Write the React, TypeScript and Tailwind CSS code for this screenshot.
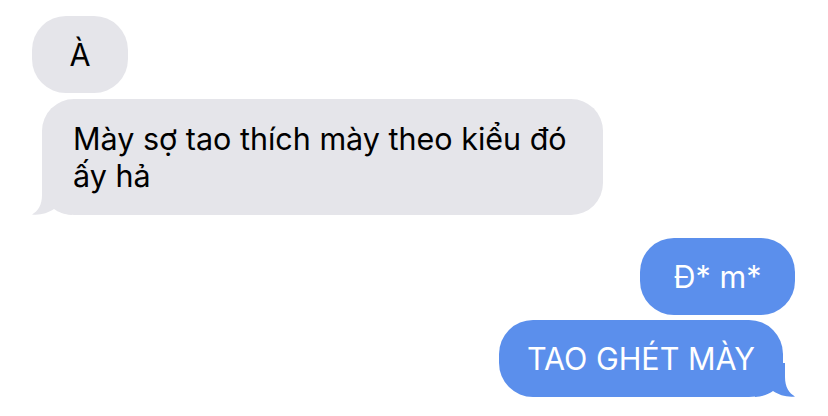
import React from 'react';

const font = { fontFamily: 'Inter, "Noto Sans", sans-serif' };

function Tail({ color, side }: { color: string; side: 'left' | 'right' }) {
  return (
    <svg
      width="40"
      height="34"
      viewBox="0 0 40 34"
      className={
        side === 'left'
          ? 'absolute bottom-0 left-[-10px]'
          : 'absolute bottom-0 right-[-12px] -scale-x-100'
      }
    >
      <path
        d="M10 0 L10 14 C10 24 6 30 0 33.5 C8 34.5 16 32 22 28 C26 31 32 33.5 40 34 L40 0 Z"
        fill={color}
      />
    </svg>
  );
}

export default function App() {
  return (
    <div className="w-[828px] h-[416px] bg-white overflow-hidden pt-[16px] text-[30.5px] leading-[37px]" style={font}>
      <div className="flex flex-col">
        <div className="ml-[32px] w-[96px] rounded-[34px] bg-[#e5e5ea] py-[20px] text-center text-black">
          À
        </div>

        <div className="relative ml-[42px] mt-[6px] w-[561px] rounded-[32px] bg-[#e5e5ea] pl-[31px] pr-[20px] py-[21px] text-black">
          Mày sợ tao thích mày theo kiểu đó ấy hả
          <Tail color="#e5e5ea" side="left" />
        </div>

        <div className="mt-[23px] mr-[33px] self-end w-[155px] rounded-[34px] bg-[#5b8fec] py-[20px] text-center text-white">
          Đ* m*
        </div>

        <div className="relative mt-[5px] mr-[45px] self-end rounded-[34px] bg-[#5b8fec] px-[28px] py-[20px] text-white">
          TAO GHÉT MÀY
          <Tail color="#5b8fec" side="right" />
        </div>
      </div>
    </div>
  );
}
